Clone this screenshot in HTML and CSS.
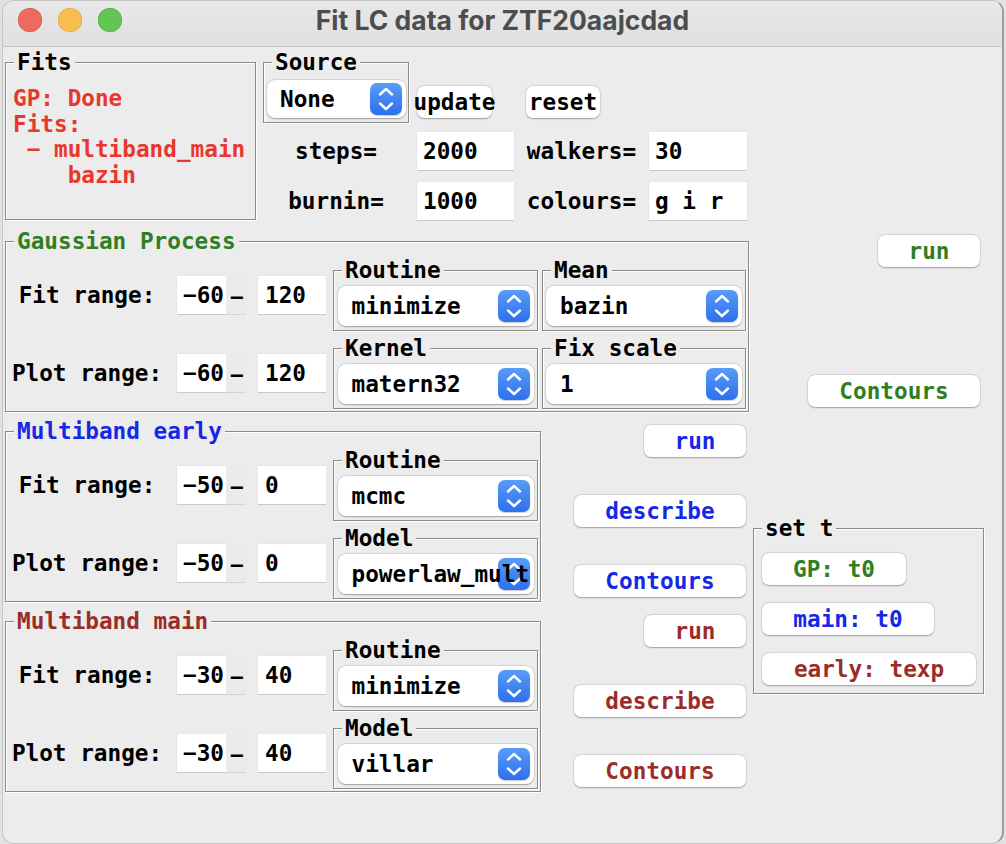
FILE: index.html
```html
<!DOCTYPE html>
<html>
<head>
<meta charset="utf-8">
<title>Fit LC data for ZTF20aajcdad</title>
<link rel="stylesheet" href="styles.css">
</head>
<body>
<div class="window">
  <div class="titlebar">
    <div class="lights"><span class="light red"></span><span class="light yellow"></span><span class="light green"></span></div>
    <div class="title">Fit LC data for ZTF20aajcdad</div>
    <div></div>
  </div>
  <div class="content">
    <div class="top">
      <div class="lf fits">
        <div class="lf-title">Fits</div>
        <div class="fits-text">GP: Done
Fits:
 − multiband_main
    bazin</div>
      </div>
      <div class="lf source">
        <div class="lf-title">Source</div>
        <div class="popup popup-src"><span class="pv">None</span><span class="stepper"><svg viewBox="0 0 32 32" width="32" height="32"><path d="M10 11.5 L16 6 L22 11.5 M10 20.5 L16 26 L22 20.5" fill="none" stroke="#fff" stroke-width="2.4" stroke-linecap="round" stroke-linejoin="round"/></svg></span></div>
      </div>
      <div class="btn btn-update">update</div>
      <div class="btn btn-reset">reset</div>
      <div class="lbl c3 r2">steps=</div>
      <div class="entry e-top c5 r2">2000</div>
      <div class="lbl c7 r2">walkers=</div>
      <div class="entry e-top c9 r2">30</div>
      <div class="lbl c3 r3">burnin=</div>
      <div class="entry e-top c5 r3">1000</div>
      <div class="lbl c7 r3">colours=</div>
      <div class="entry e-top c9 r3">g i r</div>
    </div>

    <div class="gp-row">
      <div class="lf gp">
        <div class="lf-title green">Gaussian Process</div>
        <div class="fgrid fgrid-wide">
          <div class="rlbl g1 gr1">Fit range:</div>
          <div class="rng g3 gr1"><span class="entry e-lo">−60</span><span class="dash">−</span></div>
          <div class="entry e-hi g5 gr1">120</div>
          <div class="lf sub g7 gr1">
            <div class="lf-title">Routine</div>
            <div class="popup"><span class="pv">minimize</span><span class="stepper"><svg viewBox="0 0 32 32" width="32" height="32"><path d="M10 11.5 L16 6 L22 11.5 M10 20.5 L16 26 L22 20.5" fill="none" stroke="#fff" stroke-width="2.4" stroke-linecap="round" stroke-linejoin="round"/></svg></span></div>
          </div>
          <div class="lf sub g9 gr1">
            <div class="lf-title">Mean</div>
            <div class="popup"><span class="pv">bazin</span><span class="stepper"><svg viewBox="0 0 32 32" width="32" height="32"><path d="M10 11.5 L16 6 L22 11.5 M10 20.5 L16 26 L22 20.5" fill="none" stroke="#fff" stroke-width="2.4" stroke-linecap="round" stroke-linejoin="round"/></svg></span></div>
          </div>
          <div class="rlbl g1 gr2">Plot range:</div>
          <div class="rng g3 gr2"><span class="entry e-lo">−60</span><span class="dash">−</span></div>
          <div class="entry e-hi g5 gr2">120</div>
          <div class="lf sub g7 gr2">
            <div class="lf-title">Kernel</div>
            <div class="popup"><span class="pv">matern32</span><span class="stepper"><svg viewBox="0 0 32 32" width="32" height="32"><path d="M10 11.5 L16 6 L22 11.5 M10 20.5 L16 26 L22 20.5" fill="none" stroke="#fff" stroke-width="2.4" stroke-linecap="round" stroke-linejoin="round"/></svg></span></div>
          </div>
          <div class="lf sub g9 gr2">
            <div class="lf-title">Fix scale</div>
            <div class="popup"><span class="pv">1</span><span class="stepper"><svg viewBox="0 0 32 32" width="32" height="32"><path d="M10 11.5 L16 6 L22 11.5 M10 20.5 L16 26 L22 20.5" fill="none" stroke="#fff" stroke-width="2.4" stroke-linecap="round" stroke-linejoin="round"/></svg></span></div>
          </div>
        </div>
      </div>
      <div class="gp-side">
        <div class="btn btn-run green first">run</div>
        <div class="btn btn-wide green contours-gp">Contours</div>
      </div>
    </div>

    <div class="lower">
      <div class="left-col">
        <div class="lf mb early">
          <div class="lf-title blue">Multiband early</div>
          <div class="fgrid">
            <div class="rlbl g1 gr1">Fit range:</div>
            <div class="rng g3 gr1"><span class="entry e-lo">−50</span><span class="dash">−</span></div>
            <div class="entry e-hi g5 gr1">0</div>
            <div class="lf sub g7 gr1">
              <div class="lf-title">Routine</div>
              <div class="popup"><span class="pv">mcmc</span><span class="stepper"><svg viewBox="0 0 32 32" width="32" height="32"><path d="M10 11.5 L16 6 L22 11.5 M10 20.5 L16 26 L22 20.5" fill="none" stroke="#fff" stroke-width="2.4" stroke-linecap="round" stroke-linejoin="round"/></svg></span></div>
            </div>
            <div class="rlbl g1 gr2">Plot range:</div>
            <div class="rng g3 gr2"><span class="entry e-lo">−50</span><span class="dash">−</span></div>
            <div class="entry e-hi g5 gr2">0</div>
            <div class="lf sub g7 gr2">
              <div class="lf-title">Model</div>
              <div class="popup"><span class="stepper"><svg viewBox="0 0 32 32" width="32" height="32"><path d="M10 11.5 L16 6 L22 11.5 M10 20.5 L16 26 L22 20.5" fill="none" stroke="#fff" stroke-width="2.4" stroke-linecap="round" stroke-linejoin="round"/></svg></span><span class="pv">powerlaw_mult</span></div>
            </div>
          </div>
        </div>
        <div class="lf mb main">
          <div class="lf-title brown">Multiband main</div>
          <div class="fgrid">
            <div class="rlbl g1 gr1">Fit range:</div>
            <div class="rng g3 gr1"><span class="entry e-lo">−30</span><span class="dash">−</span></div>
            <div class="entry e-hi g5 gr1">40</div>
            <div class="lf sub g7 gr1">
              <div class="lf-title">Routine</div>
              <div class="popup"><span class="pv">minimize</span><span class="stepper"><svg viewBox="0 0 32 32" width="32" height="32"><path d="M10 11.5 L16 6 L22 11.5 M10 20.5 L16 26 L22 20.5" fill="none" stroke="#fff" stroke-width="2.4" stroke-linecap="round" stroke-linejoin="round"/></svg></span></div>
            </div>
            <div class="rlbl g1 gr2">Plot range:</div>
            <div class="rng g3 gr2"><span class="entry e-lo">−30</span><span class="dash">−</span></div>
            <div class="entry e-hi g5 gr2">40</div>
            <div class="lf sub g7 gr2">
              <div class="lf-title">Model</div>
              <div class="popup"><span class="pv">villar</span><span class="stepper"><svg viewBox="0 0 32 32" width="32" height="32"><path d="M10 11.5 L16 6 L22 11.5 M10 20.5 L16 26 L22 20.5" fill="none" stroke="#fff" stroke-width="2.4" stroke-linecap="round" stroke-linejoin="round"/></svg></span></div>
            </div>
          </div>
        </div>
      </div>
      <div class="mid-col">
        <div class="btn btn-run blue m-first">run</div>
        <div class="btn btn-wide blue m-gap">describe</div>
        <div class="btn btn-wide blue m-gap">Contours</div>
        <div class="btn btn-run brown m-run2">run</div>
        <div class="btn btn-wide brown m-gap">describe</div>
        <div class="btn btn-wide brown m-gap">Contours</div>
      </div>
      <div class="right-col">
        <div class="lf sett">
          <div class="lf-title">set t</div>
          <div class="sett-body">
            <div class="btn green b-gp">GP: t0</div>
            <div class="btn blue b-main">main: t0</div>
            <div class="btn brown b-early">early: texp</div>
          </div>
        </div>
      </div>
    </div>
  </div>
</div>
</body>
</html>
```
FILE: styles.css
```css
* { box-sizing: border-box; }
html, body { margin: 0; padding: 0; }
body {
  width: 1006px;
  height: 844px;
  overflow: hidden;
  background: #e2e2e2;
  font-family: "DejaVu Sans Mono", "Liberation Mono", monospace;
  font-weight: bold;
  font-size: 22.7px;
  color: #000;
}
.window {
  margin-left: 2px;
  width: 1002px;
  height: 844px;
  background: #ececec;
  border: 1px solid #c4c4c4;
  border-right: 2px solid #9c9c9c;
  border-radius: 12px;
  overflow: hidden;
}
.titlebar {
  height: 46px;
  display: grid;
  grid-template-columns: 1fr auto 1fr;
  align-items: start;
  background: linear-gradient(#e8e8e8, #e0e0e0);
  border-bottom: 1px solid #c3c3c3;
}
.lights { display: flex; gap: 16px; padding: 7px 0 0 15px; }
.light { width: 24px; height: 24px; border-radius: 50%; display: block; }
.light.red { background: #ee6a5e; box-shadow: inset 0 0 0 0.5px #d05446; }
.light.yellow { background: #f5be4f; box-shadow: inset 0 0 0 0.5px #d6a140; }
.light.green { background: #62c554; box-shadow: inset 0 0 0 0.5px #4fa940; }
.title {
  font-family: Inter, "Open Sans", sans-serif;
  font-weight: 700;
  font-size: 26.5px;
  line-height: 38px;
  color: #4d4d4d;
  white-space: nowrap;
}
.content { padding: 2px 0 0 2px; }

/* label frames (Tk groove) */
.lf {
  border: 1px solid #8b8b8b;
  box-shadow: inset 1px 1px 0 #fff, 1px 1px 0 #fff;
}
.lf-title {
  width: fit-content;
  height: 26px;
  line-height: 26px;
  margin: -14px 0 0 8px;
  padding: 0 3px;
  background: #ececec;
  white-space: nowrap;
}
.green { color: #2f7e21; }
.blue { color: #1428e6; }
.brown { color: #9b2d29; }

/* top area */
.top {
  display: grid;
  grid-template-columns: 251px 7px 146px 8px 97px 12px 111px 12px 98px;
  grid-template-rows: 75px 46px 50px;
}
.fits { grid-column: 1; grid-row: 1 / 4; margin-top: 13px; }
.fits-text {
  white-space: pre;
  color: #e8372c;
  line-height: 25.7px;
  padding-left: 7px;
  margin-top: 11px;
}
.source { grid-column: 3; grid-row: 1; margin-top: 13px; align-self: start; padding: 5px 3px 4px 3px; }
.source .lf-title { margin-top: -19px; margin-left: 5px; margin-bottom: 5px; }
.btn-update { grid-column: 5; grid-row: 1; align-self: end; width: 75px; margin-bottom: 6px; }
.btn-reset { grid-column: 7; grid-row: 1; align-self: end; width: 74px; margin-bottom: 6px; }
.c3 { grid-column: 3; }
.c5 { grid-column: 5; }
.c7 { grid-column: 7; }
.c9 { grid-column: 9; }
.r2 { grid-row: 2; }
.r3 { grid-row: 3; }
.lbl { align-self: end; height: 38px; line-height: 38px; text-align: center; white-space: nowrap; }
.e-top { align-self: end; }

/* controls */
.entry {
  display: block;
  height: 38px;
  line-height: 38px;
  background: #fff;
  padding-left: 6px;
  white-space: nowrap;
  box-shadow: 0 1px 0 rgba(0,0,0,0.13), 0 0 0 0.5px rgba(0,0,0,0.05);
}
.btn {
  display: flex;
  align-items: center;
  justify-content: center;
  height: 32px;
  background: #fff;
  border-radius: 7px;
  white-space: nowrap;
  box-shadow: 0 0.5px 1.5px rgba(0,0,0,0.3), 0 0 0 0.5px rgba(0,0,0,0.08);
}
.popup {
  position: relative;
  display: flex;
  align-items: center;
  width: 196px;
  height: 40px;
  margin: 3px auto 0;
  background: #fff;
  border-radius: 8px;
  padding-left: 14px;
  overflow: hidden;
  white-space: nowrap;
  box-shadow: 0 0.5px 1.5px rgba(0,0,0,0.3), 0 0 0 0.5px rgba(0,0,0,0.08);
}
.popup-src { width: 139px; height: 38px; margin: 0; padding-left: 13px; }
.pv { position: relative; z-index: 1; }
.stepper {
  position: absolute;
  right: 4px;
  top: 50%;
  margin-top: -16px;
  width: 32px;
  height: 32px;
  border-radius: 7px;
  background: linear-gradient(#5a9cf8, #2c70ee);
  box-shadow: 0 0.5px 1px rgba(0,0,0,0.2);
}
.stepper svg { display: block; }

/* GP row */
.gp-row { display: flex; margin-top: 8px; }
.gp { width: 744px; margin-top: 13px; }
.gp-side {
  flex: 1;
  display: flex;
  flex-direction: column;
  align-items: flex-end;
  padding-right: 22px;
}
.btn-run { width: 102px; }
.btn-wide { width: 172px; }
.gp-side .first { margin-top: 7px; }
.gp-side .contours-gp { margin-top: 108px; }

.fgrid {
  display: grid;
  grid-template-columns: 162px 9px 69px 12px 68px 7px 205px 4px 204px;
  grid-template-rows: 76px 76px;
  row-gap: 2px;
  padding: 3px 0 0 0;
}
.g1 { grid-column: 1; }
.g3 { grid-column: 3; }
.g5 { grid-column: 5; }
.g7 { grid-column: 7; }
.g9 { grid-column: 9; }
.gr1 { grid-row: 1; }
.gr2 { grid-row: 2; }
.rlbl { align-self: center; text-align: center; line-height: 38px; white-space: nowrap; }
.rng { align-self: center; display: flex; }
.e-lo { width: 49px; }
.dash {
  width: 20px;
  height: 38px;
  line-height: 38px;
  padding-top: 2px;
  padding-left: 4px;
  overflow: hidden;
  background: #ebebeb;
  box-shadow: 0 1px 0 rgba(0,0,0,0.1);
}
.e-hi { align-self: center; padding-left: 7px; }
.sub { margin-top: 13px; align-self: start; padding-bottom: 4px; }

/* lower */
.lower { display: flex; margin-top: 6px; }
.left-col { width: 536px; display: flex; flex-direction: column; }
.mb { margin-top: 13px; }
.mb.main { margin-top: 19px; }
.mid-col {
  width: 172px;
  margin-left: 33px;
  display: flex;
  flex-direction: column;
  align-items: flex-end;
}
.m-first { margin-top: 7px; }
.m-gap { margin-top: 38px; }
.m-run2 { margin-top: 18px; }
.right-col { margin-left: 7px; }
.sett { width: 231px; margin-top: 110px; }
.sett-body {
  display: flex;
  flex-direction: column;
  align-items: flex-start;
  gap: 18px;
  padding: 12px 0 8px 8px;
}
.b-gp { width: 144px; }
.b-main { width: 172px; }
.b-early { width: 214px; }
```
